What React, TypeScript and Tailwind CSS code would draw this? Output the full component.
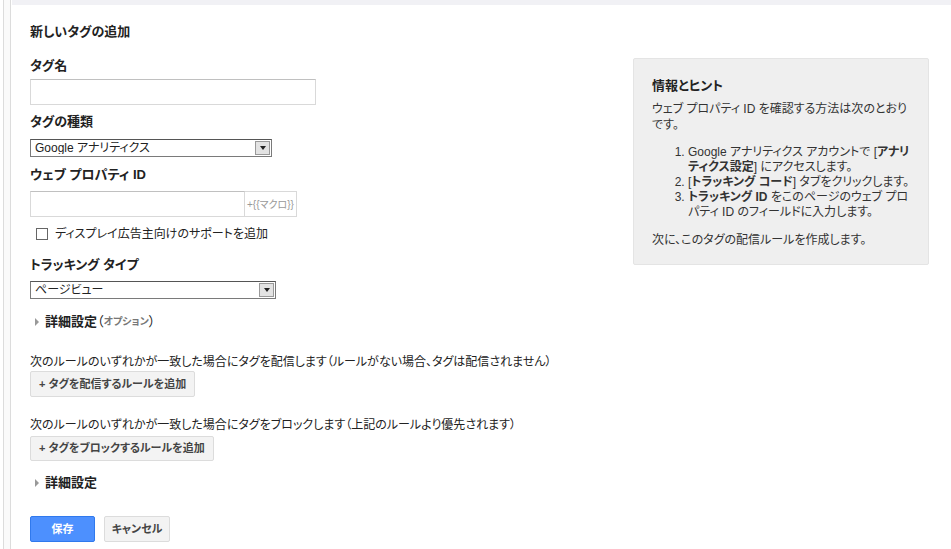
import React from 'react'

const font = { fontFamily: 'Arial, "Liberation Sans", "Noto Sans CJK JP", sans-serif' }

function Caret() {
  return (
    <span className="inline-block w-0 h-0 border-y-[4px] border-y-transparent border-l-[4px] border-l-[#999] mr-[6px]" />
  )
}

function SelectBox({ value, width }: { value: string; width: string }) {
  return (
    <div className={`${width} h-[18px] flex items-center border border-[#7a7a7a] border-t-[#555] bg-white`}>
      <span className="flex-1 pl-[4px] text-[12px] leading-none text-[#222] truncate">{value}</span>
      <span className="w-[15px] h-[14px] mr-[1px] flex items-center justify-center bg-[#e3e3e3] border border-[#999]">
        <span className="w-0 h-0 border-x-[3px] border-x-transparent border-t-[4px] border-t-[#222]" />
      </span>
    </div>
  )
}

function Label({ children }: { children: React.ReactNode }) {
  return <div className="text-[13px] font-bold leading-[16px] text-[#222]">{children}</div>
}

export default function App() {
  return (
    <div className="w-[951px] h-[549px] flex bg-white overflow-hidden [font-feature-settings:'palt']" style={font}>
      {/* left gutter */}
      <div className="w-[12px] flex shrink-0">
        <div className="w-[3px]" />
        <div className="w-[1px] bg-[#dcdcdc]" />
        <div className="w-[6px] bg-[#fafafa]" />
        <div className="w-[1px] bg-[#dcdcdc]" />
        <div className="w-[1px]" />
      </div>

      <div className="flex-1 flex flex-col">
        <div className="h-[5px] bg-[#f1f1f5]" />
        <div className="flex-1 flex pl-[18px] pr-[22px]">
          {/* form */}
          <div className="flex-1 pt-[19px] text-[#222]">
            <div className="text-[13px] font-bold leading-[16px]">新しいタグの追加</div>

            <div className="mt-[18px]"><Label>タグ名</Label></div>
            <div className="mt-[5px] w-[286px] h-[26px] border border-[#d9d9d9] border-t-[#c0c0c0] bg-white" />

            <div className="mt-[9px]"><Label>タグの種類</Label></div>
            <div className="mt-[9px]"><SelectBox value="Google アナリティクス" width="w-[242px]" /></div>

            <div className="mt-[10px]"><Label>ウェブ プロパティ ID</Label></div>
            <div className="mt-[8px] flex">
              <div className="w-[215px] h-[26px] border border-[#d9d9d9] border-t-[#c0c0c0] bg-white" />
              <div className="h-[26px] px-[2px] flex items-center border border-l-0 border-[#d9d9d9] text-[10px] text-[#999]">+{'{{'}マクロ{'}}'}</div>
            </div>

            <div className="mt-[9px] flex items-center pl-[6px]">
              <span className="w-[12px] h-[12px] border border-[#666] bg-white" />
              <span className="ml-[7px] text-[12px] leading-[16px]">ディスプレイ広告主向けのサポートを追加</span>
            </div>

            <div className="mt-[15px]"><Label>トラッキング タイプ</Label></div>
            <div className="mt-[8px]"><SelectBox value="ページビュー" width="w-[246px]" /></div>

            <div className="mt-[15px] flex items-center pl-[5px] text-[13px] font-bold leading-[16px]">
              <Caret />
              <span>詳細設定</span>
              <span className="font-normal">（</span>
              <span className="text-[10px] text-[#777]">オプション</span>
              <span className="font-normal">）</span>
            </div>

            <div className="mt-[24px] text-[12px] leading-[16px]">
              次のルールのいずれかが一致した場合にタグを配信します（ルールがない場合、タグは配信されません）
            </div>
            <button className="mt-[1px] block h-[26px] px-[8px] bg-[#f3f3f3] border border-[#dcdcdc] rounded-[2px] text-[11px] font-bold text-[#444]">
              + タグを配信するルールを追加
            </button>

            <div className="mt-[20px] text-[12px] leading-[16px]">
              次のルールのいずれかが一致した場合にタグをブロックします（上記のルールより優先されます）
            </div>
            <button className="mt-[3px] block h-[25px] px-[8px] bg-[#f3f3f3] border border-[#dcdcdc] rounded-[2px] text-[11px] font-bold text-[#444]">
              + タグをブロックするルールを追加
            </button>

            <div className="mt-[14px] flex items-center pl-[5px] text-[13px] font-bold leading-[16px]">
              <Caret />
              <span>詳細設定</span>
            </div>

            <div className="mt-[25px] flex gap-[9px]">
              <button className="w-[65px] h-[26px] bg-[#4d90fe] border border-[#3079ed] rounded-[2px] text-[11px] font-bold text-white">
                保存
              </button>
              <button className="w-[66px] h-[26px] bg-[#f3f3f3] border border-[#dcdcdc] rounded-[2px] text-[11px] font-bold text-[#444]">
                キャンセル
              </button>
            </div>
          </div>

          {/* info panel */}
          <div className="w-[296px] shrink-0 pt-[53px]">
            <div className="bg-[#efefef] border border-[#e4e4e4] rounded-[2px] pl-[18px] pr-[14px] pt-[19px] pb-[16px] text-[12px] leading-[16px] text-[#333]">
              <div className="text-[13px] font-bold leading-[16px] text-[#222]">情報とヒント</div>
              <p className="mt-[7px]">ウェブ プロパティ ID を確認する方法は次のとおりです。</p>
              <ol className="mt-[12px] pl-[36px] list-decimal leading-[15px]">
                <li>Google アナリティクス アカウントで [<b>アナリティクス設定</b>] にアクセスします。</li>
                <li>[<b>トラッキング コード</b>] タブをクリックします。</li>
                <li><b>トラッキング ID</b> をこのページのウェブ プロパティ ID のフィールドに入力します。</li>
              </ol>
              <p className="mt-[12px]">次に、このタグの配信ルールを作成します。</p>
            </div>
          </div>
        </div>
      </div>
    </div>
  )
}
